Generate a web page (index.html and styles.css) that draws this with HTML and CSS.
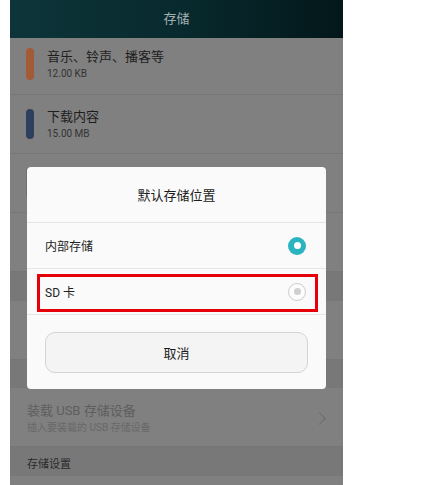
FILE: index.html
```html
<!DOCTYPE html>
<html lang="zh-CN">
<head>
    <meta charset="UTF-8">
    <meta name="viewport" content="width=device-width, initial-scale=1.0">
    <title>存储</title>
    <link rel="stylesheet" href="styles.css">
</head>
<body>
    <div class="screen">
        <div class="topbar">存储</div>

        <div class="list">
            <div class="row usage">
                <span class="bar bar-music"></span>
                <div class="text">
                    <div class="title">音乐、铃声、播客等</div>
                    <div class="sub">12.00 KB</div>
                </div>
            </div>
            <div class="row usage row-tall">
                <span class="bar bar-download"></span>
                <div class="text">
                    <div class="title">下载内容</div>
                    <div class="sub">15.00 MB</div>
                </div>
            </div>
            <div class="row usage row-tall">
                <span class="bar bar-free"></span>
                <div class="text">
                    <div class="title">可用空间</div>
                    <div class="sub">10.52 GB</div>
                </div>
            </div>
            <div class="row row-tall"></div>
            <div class="band"></div>
            <div class="row row-tall link">
                <div class="text">
                    <div class="title">卸载 SD 卡</div>
                    <div class="sub">卸载 SD 卡以便安全移除</div>
                </div>
                <span class="chevron"></span>
            </div>
            <div class="band band-short"></div>
            <div class="row row-tall link disabled">
                <div class="text">
                    <div class="title">装载 USB 存储设备</div>
                    <div class="sub">插入要装载的 USB 存储设备</div>
                </div>
                <span class="chevron"></span>
            </div>
            <div class="band header">存储设置</div>
            <div class="row"></div>
        </div>

        <!-- 默认存储位置 对话框 -->
        <div class="dialog">
            <div class="dialog-title">默认存储位置</div>
            <div class="option">
                <span>内部存储</span>
                <span class="radio checked"></span>
            </div>
            <div class="option">
                <span>SD 卡</span>
                <span class="radio"></span>
                <span class="mark"></span>
            </div>
            <div class="dialog-actions">
                <button class="cancel">取消</button>
            </div>
        </div>
    </div>
</body>
</html>
```

FILE: styles.css
```css
body {
    margin: 0;
    background-color: #fff;
    font-family: Roboto, "Noto Sans CJK SC", sans-serif;
}
.screen {
    position: relative;
    width: 333px;
    height: 485px;
    margin-left: 10px;
    background-color: #808080;
    overflow: hidden;
}
.topbar {
    height: 34px;
    padding-bottom: 4px;
    display: flex;
    align-items: center;
    justify-content: center;
    font-size: 13px;
    color: #a3b0b1;
    background: linear-gradient(90deg, #0d3539 0%, #082a2e 50%, #03171a 100%);
}

/* 列表（已被遮罩压暗） */
.row {
    box-sizing: border-box;
    height: 57px;
    padding: 0 13px 4px 16px;
    display: flex;
    align-items: center;
    border-bottom: 1px solid #767676;
}
.row-tall {
    height: 59px;
    padding-bottom: 0;
}
.row .text {
    flex: 1;
    display: flex;
    flex-direction: column;
    gap: 1px;
}
.row .title {
    font-size: 13px;
    line-height: 18px;
    color: #1e1e1e;
}
.row .sub {
    font-size: 10px;
    line-height: 14px;
    color: #333;
}
.bar {
    width: 8px;
    height: 32px;
    margin-right: 13px;
    border-radius: 4px;
}
.bar-music {
    background-color: #a35a36;
}
.bar-download {
    height: 30px;
    background-color: #2e3f5d;
}
.bar-free {
    background-color: #6f6f6f;
}
.link {
    padding-left: 17px;
    padding-top: 2px;
}
.disabled .title {
    color: #5e5e5e;
}
.disabled .sub {
    color: #686868;
}
.chevron {
    width: 8px;
    height: 8px;
    margin-right: 6px;
    border-top: 1.5px solid #6a6a6a;
    border-right: 1.5px solid #6a6a6a;
    transform: rotate(45deg);
}
.band {
    height: 29px;
    background-color: #787878;
}
.band-short {
    height: 28px;
}
.header {
    box-sizing: border-box;
    height: 29px;
    padding: 2px 0 0 17px;
    display: flex;
    align-items: center;
    font-size: 11px;
    color: #2a2a2a;
}

/* 对话框 */
.dialog {
    position: absolute;
    top: 167px;
    left: 17px;
    width: 299px;
    background-color: #fafafa;
    border-radius: 4px;
}
.dialog-title {
    height: 55px;
    display: flex;
    align-items: center;
    justify-content: center;
    font-size: 13px;
    color: #1c1c1c;
    border-bottom: 1px solid #e6e6e6;
}
.option {
    position: relative;
    box-sizing: border-box;
    height: 46px;
    padding: 0 20px 0 18px;
    display: flex;
    align-items: center;
    justify-content: space-between;
    font-size: 12px;
    color: #222;
    border-bottom: 1px solid #e6e6e6;
}
.radio {
    box-sizing: border-box;
    width: 18px;
    height: 18px;
    border: 1px solid #cdcdcd;
    border-radius: 50%;
    display: flex;
    align-items: center;
    justify-content: center;
    background-color: #fcfcfc;
}
.radio::after {
    content: "";
    width: 7px;
    height: 7px;
    border-radius: 50%;
    background-color: #cfcfcf;
}
.radio.checked {
    border: none;
    background-color: #2bb3bf;
}
.radio.checked::after {
    background-color: #fff;
}
.mark {
    position: absolute;
    top: 5px;
    left: 10px;
    right: 8px;
    bottom: 2px;
    border: 3px solid #e5000a;
}
.dialog-actions {
    padding: 17px 18px 16px;
}
.cancel {
    width: 100%;
    height: 41px;
    font-family: Roboto, "Noto Sans CJK SC", sans-serif;
    font-size: 13px;
    color: #1c1c1c;
    background-color: #f4f4f4;
    border: 1px solid #d4d4d4;
    border-radius: 10px;
}
```
